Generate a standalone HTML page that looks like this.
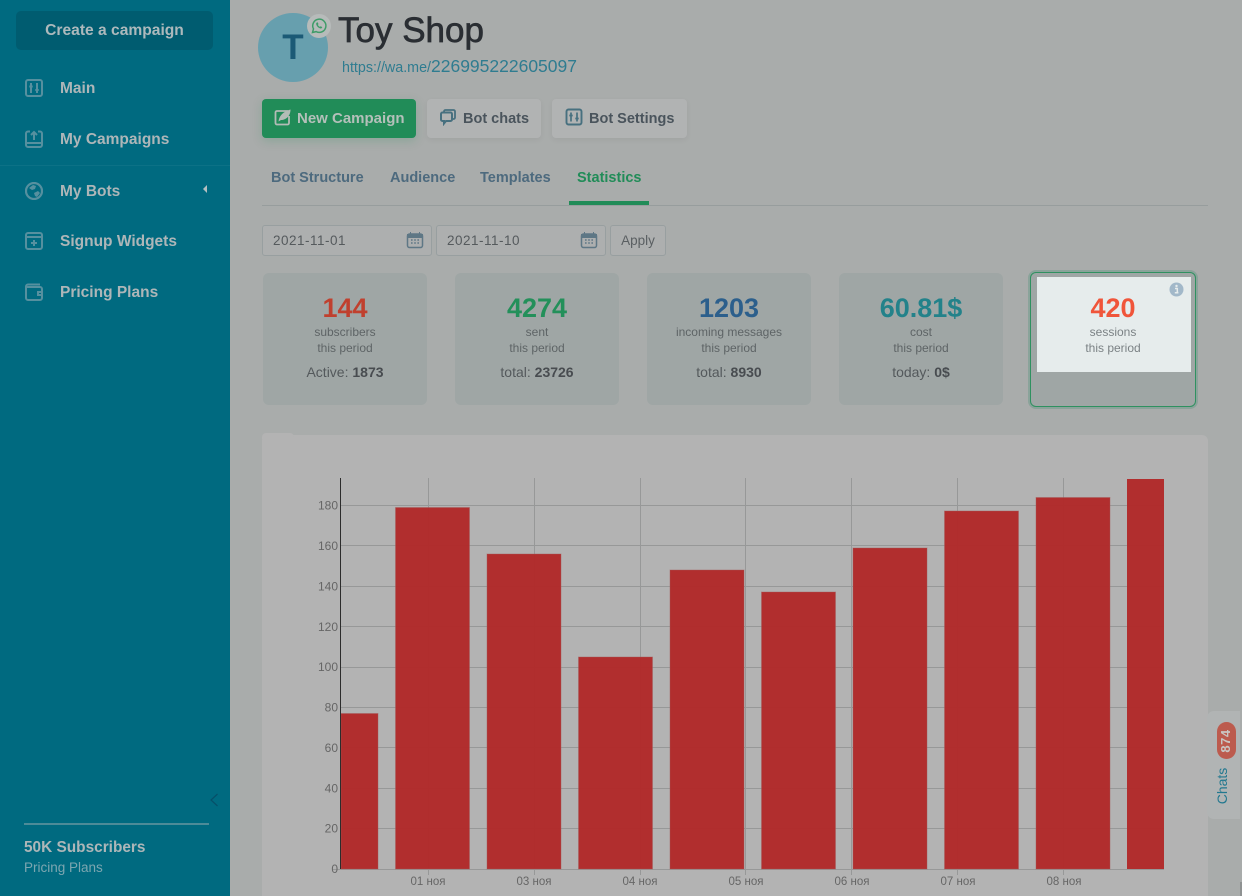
<!DOCTYPE html>
<html lang="en">
<head>
<meta charset="utf-8">
<title>Toy Shop</title>
<style>
html,body{margin:0;padding:0;width:1242px;height:896px;overflow:hidden;background:#a9acab;font-family:"Liberation Sans",sans-serif}
#wrap{position:absolute;left:0;top:0;width:1242px;height:896px;overflow:hidden;background:#a9acab}
.a{position:absolute}
.t{position:absolute;white-space:nowrap;line-height:20px;height:20px}
#side{position:absolute;left:0;top:0;width:230px;height:896px;background:#006a80}
.nav{position:absolute;left:60px;font-size:15.5px;font-weight:700;color:#aeb6b8;line-height:20px;white-space:nowrap}
.ic{position:absolute;left:25px;width:18px;height:18px;fill:none;stroke:#56909f;stroke-width:2}
.btn{position:absolute;top:99px;height:39px;border-radius:4px;background:#b1b3b3;box-shadow:0 2px 6px rgba(0,0,0,.05)}
.btxt{position:absolute;top:109px;font-size:14.5px;font-weight:700;color:#4a545c;line-height:20px;white-space:nowrap}
.tab{position:absolute;top:168px;font-size:14.5px;font-weight:700;color:#4d6a7e;line-height:20px;white-space:nowrap}
.date{position:absolute;top:225px;height:29px;width:168px;border:1px solid #989fa0;border-radius:3px;background:#adafaf;font-size:13.5px;color:#555a5d;line-height:29px;text-indent:10px;letter-spacing:.5px}
.card{position:absolute;top:273px;width:164px;height:132px;border-radius:6px;background:#9fa6a5;text-align:center}
.n{position:absolute;left:0;right:0;top:19px;font-size:27px;font-weight:700;line-height:32px}
.l{position:absolute;left:0;right:0;font-size:12px;color:#5e6466;line-height:16px}
.s{position:absolute;left:0;right:0;top:89px;font-size:14px;color:#54595c;line-height:20px}
.s b{color:#484c50}
</style>
</head>
<body>
<div id="wrap">

<div id="side">
  <div class="a" style="left:16px;top:11px;width:197px;height:39px;background:#005c70;border-radius:5px"></div>
  <div class="t" style="left:16px;width:197px;top:21px;text-align:center;font-size:15.6px;font-weight:700;color:#adb9bc">Create a campaign</div>

  <svg class="ic" style="top:79px" viewBox="0 0 18 18"><rect x="1" y="1" width="16" height="16" rx="2"/><path d="M6 4v10M12 4v10M4.3 7.5h3.4M10.3 11h3.4"/></svg>
  <div class="nav" style="top:79px">Main</div>

  <svg class="ic" style="top:130px" viewBox="0 0 18 18"><path d="M5 1.5H3a2 2 0 0 0-2 2V15a2 2 0 0 0 2 2h12a2 2 0 0 0 2-2V3.5a2 2 0 0 0-2-2h-2M1.5 13h15M9 10V2M6 5l3-3 3 3"/></svg>
  <div class="nav" style="top:130px">My Campaigns</div>

  <div class="a" style="left:0;top:165px;width:230px;height:1px;background:#0c7186"></div>

  <svg class="ic" style="top:182px" viewBox="0 0 18 18"><circle cx="9" cy="9" r="8" stroke-width="2.2"/><path d="M4 6l4-3 3 1-1 3-3 1zM9 11l4-2 2 2-3 4-2-1z" fill="#56909f" stroke="none"/></svg>
  <div class="nav" style="top:182px">My Bots</div>
  <div class="a" style="left:203px;top:185px;width:0;height:0;border-top:4px solid transparent;border-bottom:4px solid transparent;border-right:4px solid #b5bfc1"></div>

  <svg class="ic" style="top:232px" viewBox="0 0 18 18"><rect x="1" y="1" width="16" height="16" rx="2"/><path d="M1 5h16M9 8v6M6 11h6"/></svg>
  <div class="nav" style="top:232px">Signup Widgets</div>

  <svg class="ic" style="top:283px" viewBox="0 0 18 18"><path d="M15 1.5H3A2 2 0 0 0 1 3.5V15a2 2 0 0 0 2 2h12a2 2 0 0 0 2-2V6a2 2 0 0 0-2-2H1.5M17 9h-4v3h4"/></svg>
  <div class="nav" style="top:283px">Pricing Plans</div>

  <svg class="a" style="left:207px;top:792px" width="14" height="16" viewBox="0 0 14 16"><path d="M10.500 2L4 8l6.500 6" fill="none" stroke="#064f68" stroke-width="1.200"/></svg>
  <div class="a" style="left:24px;top:823px;width:185px;height:2px;background:#4d8b98"></div>
  <div class="t" style="left:24px;top:838px;font-size:15.4px;font-weight:700;color:#adb6b8">50K Subscribers</div>
  <div class="t" style="left:24px;top:858px;font-size:13.5px;color:#7ca6b0">Pricing Plans</div>
</div>

<!-- header -->
<div class="a" style="left:258px;top:13px;width:70px;height:69px;border-radius:50%;background:#679fae"></div>
<div class="a" style="left:258px;top:13px;width:70px;height:69px;line-height:70px;text-align:center;font-size:35px;font-weight:700;color:#1b5a76">T</div>
<div class="a" style="left:307px;top:14px;width:24px;height:24px;border-radius:50%;background:#b7bbba"></div>
<svg class="a" style="left:310px;top:17px" width="18" height="18" viewBox="0 0 18 18"><path d="M2.500 15.500l1-3.600A6.600 6.600 0 1 1 6.200 14.600z" fill="none" stroke="#3f9c69" stroke-width="1.500"/><path d="M6.500 5.800c-.8 1 0 3 1.300 4.200 1.300 1.200 3 1.900 3.900 1.100l.6-1-1.700-.9-.7.700c-.7-.3-1.700-1.300-2-2l.6-.8-.8-1.800z" fill="#3f9c69"/></svg>
<div class="t" style="left:338px;top:11px;height:40px;line-height:40px;font-size:35px;color:#2a2e33;-webkit-text-stroke:.7px #2a2e33">Toy Shop</div>
<div class="t" style="left:342px;top:56px;color:#2f7c90"><span style="font-size:14.3px">https://wa.me/</span><span style="font-size:17.5px">226995222605097</span></div>

<!-- buttons -->
<div class="btn" style="left:262px;width:154px;background:#218c58;box-shadow:0 3px 10px rgba(33,140,88,.22)"></div>
<svg class="a" style="left:274px;top:108px" width="18" height="18" viewBox="0 0 18 18"><path d="M14 3H3a1.500 1.500 0 0 0-1.500 1.500V15A1.500 1.500 0 0 0 3 16.500h10.500A1.500 1.500 0 0 0 15 15V8" fill="none" stroke="#b3bcb6" stroke-width="1.800"/><path d="M4.500 13.500C5 8 9 3.500 16.500 1.500 16.500 8 12 12 7 12z" fill="#b3bcb6"/></svg>
<div class="btxt" style="left:297px;color:#b4c0ba;font-size:15px">New Campaign</div>

<div class="btn" style="left:427px;width:114px"></div>
<svg class="a" style="left:439px;top:108px" width="18" height="18" viewBox="0 0 18 18"><path d="M5 4V3.500A1.500 1.500 0 0 1 6.500 2h8A1.500 1.500 0 0 1 16 3.500v6a1.500 1.500 0 0 1-1.500 1.500H14" fill="none" stroke="#47707f" stroke-width="1.800"/><path d="M3.500 4.500h8A1.500 1.500 0 0 1 13 6v5.500a1.500 1.500 0 0 1-1.500 1.500H7l-2 2.500V13H3.500A1.500 1.500 0 0 1 2 11.500V6a1.500 1.500 0 0 1 1.500-1.500z" fill="none" stroke="#47707f" stroke-width="2"/></svg>
<div class="btxt" style="left:463px">Bot chats</div>

<div class="btn" style="left:552px;width:135px"></div>
<svg class="a" style="left:565px;top:108px" width="18" height="18" viewBox="0 0 18 18"><rect x="1.500" y="1.500" width="15" height="15" rx="2" fill="none" stroke="#47707f" stroke-width="1.900"/><path d="M6 4.500v9M12 4.500v9M4.300 7.500h3.400M10.300 10.500h3.400" fill="none" stroke="#47707f" stroke-width="1.700"/></svg>
<div class="btxt" style="left:589px">Bot Settings</div>

<!-- tabs -->
<div class="tab" style="left:271px">Bot Structure</div>
<div class="tab" style="left:390px">Audience</div>
<div class="tab" style="left:480px">Templates</div>
<div class="tab" style="left:577px;color:#218c58">Statistics</div>
<div class="a" style="left:262px;top:205px;width:946px;height:1px;background:#979d9d"></div>
<div class="a" style="left:569px;top:201px;width:80px;height:4px;background:#218c58"></div>

<!-- dates -->
<div class="date" style="left:262px">2021-11-01</div>
<svg class="a" style="left:406px;top:231px" width="18" height="18" viewBox="0 0 18 18"><rect x="1.500" y="3" width="15" height="13.500" rx="2" fill="none" stroke="#5e7785" stroke-width="1.500"/><path d="M1.500 3.500h15v3h-15zM4.500 1v2.500M13.500 1v2.500" fill="#5e7785" stroke="#5e7785"/><path d="M5 9h1.600M8.200 9h1.600M11.400 9H13M5 12h1.600M8.200 12h1.600M11.400 12H13" stroke="#5e7785" stroke-width="1.600"/></svg>
<div class="date" style="left:436px">2021-11-10</div>
<svg class="a" style="left:580px;top:231px" width="18" height="18" viewBox="0 0 18 18"><rect x="1.500" y="3" width="15" height="13.500" rx="2" fill="none" stroke="#5e7785" stroke-width="1.500"/><path d="M1.500 3.500h15v3h-15zM4.500 1v2.500M13.500 1v2.500" fill="#5e7785" stroke="#5e7785"/><path d="M5 9h1.600M8.200 9h1.600M11.400 9H13M5 12h1.600M8.200 12h1.600M11.400 12H13" stroke="#5e7785" stroke-width="1.600"/></svg>
<div class="a" style="left:610px;top:225px;width:54px;height:29px;border:1px solid #989fa0;border-radius:3px;background:#adafaf;font-size:13.5px;color:#5a5f62;line-height:29px;text-align:center">Apply</div>

<!-- stat cards -->
<div class="card" style="left:263px">
  <div class="n" style="color:#c0402e">144</div>
  <div class="l" style="top:51px">subscribers</div>
  <div class="l" style="top:67px">this period</div>
  <div class="s">Active: <b>1873</b></div>
</div>
<div class="card" style="left:455px">
  <div class="n" style="color:#23905a">4274</div>
  <div class="l" style="top:51px">sent</div>
  <div class="l" style="top:67px">this period</div>
  <div class="s">total: <b>23726</b></div>
</div>
<div class="card" style="left:647px">
  <div class="n" style="color:#2c5f8c">1203</div>
  <div class="l" style="top:51px">incoming messages</div>
  <div class="l" style="top:67px">this period</div>
  <div class="s">total: <b>8930</b></div>
</div>
<div class="card" style="left:839px">
  <div class="n" style="color:#23828a">60.81$</div>
  <div class="l" style="top:51px">cost</div>
  <div class="l" style="top:67px">this period</div>
  <div class="s">today: <b>0$</b></div>
</div>
<div class="a" style="left:1030px;top:272px;width:164px;height:133px;border:1px solid #2f9160;border-radius:6px;background:#9fa6a5;box-shadow:0 0 0 2px #8aa39a"></div>
<div class="a" style="left:1037px;top:277px;width:154px;height:95px;background:#e6ecec;text-align:center">
  <div class="n" style="top:15px;right:2px;color:#f0553a">420</div>
  <div class="l" style="top:47px;right:2px;color:#7b8285">sessions</div>
  <div class="l" style="top:63px;right:2px;color:#7b8285">this period</div>
</div>
<svg class="a" style="left:1169px;top:282px" width="15" height="15" viewBox="0 0 15 15"><circle cx="7.500" cy="7.500" r="7" fill="#a2b8c9"/><path d="M6 6.500h2.300v4H9.300M5.800 10.700h3.600" fill="none" stroke="#e6ecec" stroke-width="1.500"/><circle cx="7.500" cy="4" r="1.200" fill="#e6ecec"/></svg>

<!-- chart -->
<div class="a" style="left:262px;top:435px;width:946px;height:461px;background:#b3b3b3;border-radius:6px 6px 0 0"></div>
<div class="a" style="left:262px;top:433px;width:32px;height:6px;background:#b3b3b3;border-radius:4px 4px 0 0"></div>
<svg class="a" style="left:262px;top:435px" width="946" height="461" viewBox="262 435 946 461" font-family="Liberation Sans, sans-serif" font-size="12" fill="#666">
  <g stroke="#979898" stroke-width="1" shape-rendering="crispEdges">
    <path d="M340 505.500H1164M340 545.500H1164M340 586.500H1164M340 626.500H1164M340 667.500H1164M340 707.500H1164M340 747.500H1164M340 788.500H1164M340 828.500H1164M333 869.500H1164"/>
    <path d="M428.500 478V875M534.500 478V875M640.500 478V875M745.500 478V875M851.500 478V875M957.500 478V875M1063.500 478V875"/>
  </g>
  <g fill="#b12727" fill-opacity=".95" stroke="#a45757" stroke-opacity=".4" stroke-width="1">
    <rect x="341" y="713.500" width="37" height="155.500"/>
    <rect x="395.500" y="507.500" width="74" height="361.500"/>
    <rect x="487" y="554" width="74" height="315"/>
    <rect x="578.500" y="657" width="74" height="212"/>
    <rect x="670" y="570" width="74" height="299"/>
    <rect x="761.500" y="592" width="74" height="277"/>
    <rect x="853" y="548" width="74" height="321"/>
    <rect x="944.500" y="511" width="74" height="358"/>
    <rect x="1036" y="497.500" width="74" height="371.500"/>
  </g>
  <rect x="1127" y="479" width="37" height="390" fill="#b12727" fill-opacity=".95"/>
  <path d="M340.500 478V869" stroke="#2c2c2c" stroke-width="1" shape-rendering="crispEdges"/>
  <g text-anchor="end">
    <text x="338" y="509.500">180</text><text x="338" y="550">160</text><text x="338" y="590.500">140</text><text x="338" y="631">120</text><text x="338" y="671">100</text><text x="338" y="711.500">80</text><text x="338" y="752">60</text><text x="338" y="792.500">40</text><text x="338" y="832.500">20</text><text x="338" y="873">0</text>
  </g>
  <g text-anchor="middle" font-size="11.500">
    <text x="428" y="885">01 ноя</text><text x="534" y="885">03 ноя</text><text x="640" y="885">04 ноя</text><text x="746" y="885">05 ноя</text><text x="852" y="885">06 ноя</text><text x="958" y="885">07 ноя</text><text x="1064" y="885">08 ноя</text>
  </g>
</svg>

<!-- chats tab -->
<div class="a" style="left:1207px;top:711px;width:33px;height:108px;background:#b1b4b4;border-radius:7px 0 0 7px"></div>
<div class="a" style="left:1217px;top:722px;width:19px;height:37px;background:#bc5b4e;border-radius:10px"></div>
<div class="a" style="left:1207px;top:731px;width:38px;height:20px;line-height:20px;text-align:center;font-size:13px;font-weight:700;color:#c9c5c2;transform:rotate(-90deg);letter-spacing:.5px">874</div>
<div class="a" style="left:1197px;top:776px;width:50px;height:20px;line-height:20px;text-align:center;font-size:14px;color:#22788f;transform:rotate(-90deg)">Chats</div>
<div class="a" style="left:1240px;top:882px;width:2px;height:14px;background:#8f9292"></div>
</div>
</body>
</html>
